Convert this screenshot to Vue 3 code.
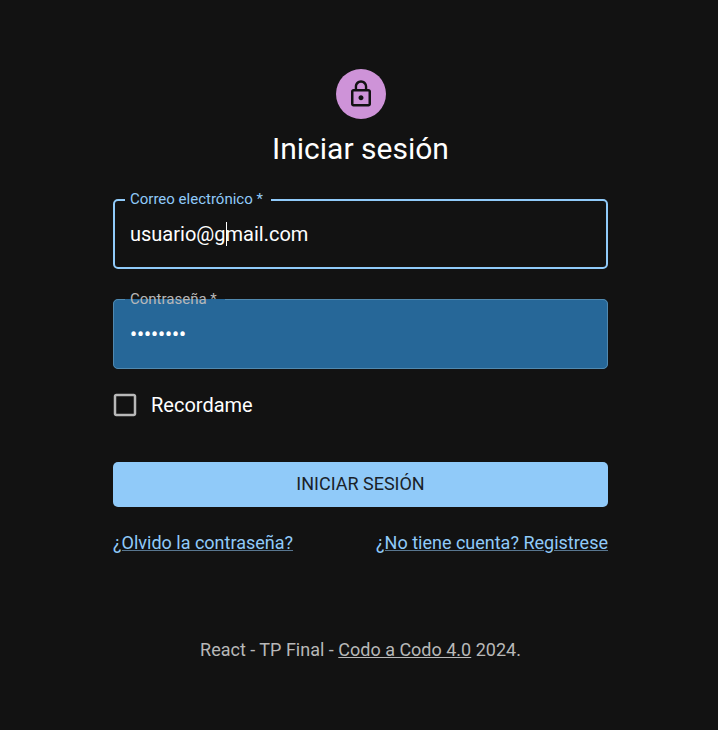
<script setup>
import { ref } from 'vue'

const email = ref('usuario@gmail.com')
const password = ref('12345678')
const remember = ref(false)
</script>

<template>
  <main class="page">
    <div class="avatar">
      <svg viewBox="0 0 24 24" width="30" height="30" aria-hidden="true">
        <path d="M12 17c1.1 0 2-.9 2-2s-.9-2-2-2-2 .9-2 2 .9 2 2 2m6-9h-1V6c0-2.76-2.24-5-5-5S7 3.24 7 6v2H6c-1.1 0-2 .9-2 2v10c0 1.100.9 2 2 2h12c1.100 0 2-.9 2-2V10c0-1.100-.9-2-2-2M8.900 6c0-1.710 1.390-3.100 3.100-3.100s3.100 1.390 3.100 3.100v2H8.900zM18 20H6V10h12z" />
      </svg>
    </div>
    <h1 class="title">Iniciar sesión</h1>

    <form class="form" @submit.prevent>
      <fieldset class="field focused">
        <legend><label for="email">Correo electrónico *</label></legend>
        <input id="email" v-model="email" type="text" autocomplete="email" />
        <span class="caret"></span>
      </fieldset>

      <fieldset class="field filled">
        <legend><label for="password">Contraseña *</label></legend>
        <input id="password" v-model="password" type="password" autocomplete="current-password" />
      </fieldset>

      <label class="remember">
        <span class="box">
          <input v-model="remember" type="checkbox" />
          <svg viewBox="0 0 24 24" width="30" height="30" aria-hidden="true">
            <path v-if="remember" d="M19 3H5c-1.110 0-2 .9-2 2v14c0 1.100.89 2 2 2h14c1.110 0 2-.9 2-2V5c0-1.100-.89-2-2-2m-9 14-5-5 1.410-1.410L10 14.170l7.590-7.590L19 8z" />
            <path v-else d="M19 5v14H5V5zm0-2H5c-1.100 0-2 .9-2 2v14c0 1.100.9 2 2 2h14c1.100 0 2-.9 2-2V5c0-1.100-.9-2-2-2" />
          </svg>
        </span>
        <span>Recordame</span>
      </label>

      <button class="submit" type="submit">Iniciar sesión</button>

      <nav class="links">
        <a href="#">¿Olvido la contraseña?</a>
        <a href="#">¿No tiene cuenta? Registrese</a>
      </nav>
    </form>

    <footer class="footer">React - TP Final - <a href="#">Codo a Codo 4.0</a> 2024.</footer>
  </main>
</template>

<style>
body {
  background: #121212;
}
</style>

<style scoped>
.page {
  box-sizing: border-box;
  max-width: 558px;
  margin: 0 auto;
  padding: 69px 30px 30px 33px;
  display: flex;
  flex-direction: column;
  align-items: center;
  font-family: Roboto, "Liberation Sans", sans-serif;
  font-size: 20px;
  color: #fff;
}

.avatar {
  width: 50px;
  height: 50px;
  border-radius: 50%;
  background: #ce93d8;
  display: flex;
  align-items: center;
  justify-content: center;
}

.avatar svg {
  fill: #121212;
}

.title {
  margin: 10px 0 0;
  font-size: 30px;
  font-weight: 400;
  line-height: 40px;
}

.form {
  width: 100%;
  margin-top: 21px;
}

.field {
  position: relative;
  min-width: 0;
  margin: 0;
  padding: 0 10px;
  border: 2px solid #90caf9;
  border-radius: 5px;
}

.field legend {
  padding: 0 8px 2px 5px;
  font-size: 15px;
  line-height: 18px;
  color: #90caf9;
}

.field label {
  display: block;
}

.field input {
  box-sizing: border-box;
  display: block;
  width: 100%;
  height: 57px;
  padding: 12px 5px 21px;
  border: 0;
  outline: 0;
  background: transparent;
  font: inherit;
  line-height: 24px;
  color: #fff;
}

.field.filled {
  margin-top: 21px;
  padding: 0 11px;
  border: 1px solid #5189af;
  background: #266798;
}

.filled legend {
  padding-bottom: 0;
  line-height: 19px;
  color: #b8b8b8;
}

.filled input {
  height: 59px;
  padding: 13px 5px 22px;
  font-weight: 500;
}

.caret {
  position: absolute;
  left: 111px;
  top: 12px;
  width: 1px;
  height: 24px;
  background: #fff;
}

.remember {
  display: flex;
  align-items: center;
  gap: 11px;
  width: max-content;
  margin-top: 21px;
  margin-left: -3px;
  line-height: 30px;
}

.box {
  position: relative;
  width: 30px;
  height: 30px;
}

.box svg {
  display: block;
  fill: #b8b8b8;
}

.box input {
  position: absolute;
  inset: 0;
  width: 100%;
  height: 100%;
  margin: 0;
  opacity: 0;
}

.submit {
  display: block;
  width: 100%;
  height: 45px;
  margin-top: 42px;
  padding: 0 0 2px;
  border: 0;
  border-radius: 5px;
  background: #90caf9;
  color: #1a2229;
  font: inherit;
  font-size: 18px;
  text-transform: uppercase;
}

.links {
  display: flex;
  flex-wrap: wrap;
  justify-content: space-between;
  gap: 10px;
  margin-top: 23px;
  font-size: 18px;
  line-height: 26px;
}

.links a {
  color: #90caf9;
  text-decoration-color: #58768f;
}

.footer {
  margin-top: 81px;
  font-size: 18px;
  line-height: 26px;
  color: #b8b8b8;
}

.footer a {
  color: inherit;
}
</style>
